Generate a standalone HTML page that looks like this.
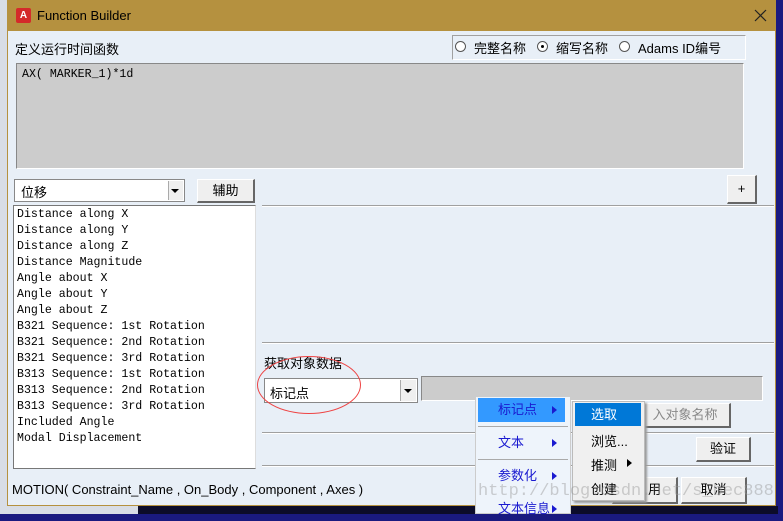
<!DOCTYPE html>
<html><head><meta charset="utf-8"><style>
*{margin:0;padding:0;box-sizing:border-box}
body{width:783px;height:514px;overflow:hidden;position:relative;background:#1a1a80;font-family:"Liberation Sans","Noto Sans CJK SC",sans-serif;font-size:13px;color:#000}
.a{position:absolute}
.mono{font-family:"Liberation Mono","DejaVu Sans Mono",monospace;font-size:11.6px}
.btn{position:absolute;background:#efefef;border:1px solid #fff;border-right:2px solid #666;border-bottom:2px solid #666;text-align:center;font-size:13px}
.hl{position:absolute;height:2px;border-top:1px solid #a0a0a0;border-bottom:1px solid #fff}
.list div{height:16px;line-height:16px}
.mi{position:absolute;left:0;width:95px;height:24px;line-height:24px;padding-left:20px;color:#1a1ad0}
.tri{position:absolute;right:8px;top:8px;width:0;height:0;border-top:4px solid transparent;border-bottom:4px solid transparent;border-left:5px solid #1a1ad0}
.rad{position:absolute;top:41px;width:11px;height:11px;border:1px solid #555;border-radius:50%;background:#fff}
</style></head><body>
<div class="a" style="left:0;top:0;width:8px;height:514px;background:#d8dde6"></div>
<div class="a" style="left:8px;top:506px;width:130px;height:8px;background:#d8dde6"></div>
<div class="a" style="left:138px;top:506px;width:640px;height:8px;background:#0c0c2a"></div>
<div class="a" style="left:7px;top:0;width:769px;height:506px;background:#e8eff7;border:1px solid #b5913f"></div>
<div class="a" style="left:7px;top:0;width:769px;height:31px;background:#b5913f"></div>
<div class="a" style="left:16px;top:8px;width:15px;height:15px;background:#d42a2a;border-radius:2px;color:#fff;font-size:10px;font-weight:bold;text-align:center;line-height:15px">A</div>
<div class="a" style="left:37px;top:8px;font-size:13px">Function Builder</div>
<svg class="a" style="left:754px;top:9px" width="13" height="13"><path d="M1 1L12 12M12 1L1 12" stroke="#222" stroke-width="1.2"/></svg>
<div class="a" style="left:15px;top:39px">定义运行时间函数</div>
<div class="a" style="left:452px;top:35px;width:294px;height:25px;border:1px solid #a0a0a0;border-right-color:#fff;border-bottom-color:#fff;background:#e8eff7"></div>
<div class="rad" style="left:455px"></div>
<div class="a" style="left:474px;top:38px">完整名称</div>
<div class="rad" style="left:537px"></div><div class="a" style="left:541px;top:45px;width:3px;height:3px;background:#000;border-radius:50%"></div>
<div class="a" style="left:556px;top:38px">缩写名称</div>
<div class="rad" style="left:619px"></div>
<div class="a" style="left:638px;top:38px">Adams ID编号</div>
<div class="a" style="left:16px;top:63px;width:728px;height:106px;background:#cccccc;border:1px solid #888;border-right-color:#fff;border-bottom-color:#fff"></div>
<div class="a mono" style="left:22px;top:68px">AX( MARKER_1)*1d</div>
<div class="a" style="left:14px;top:179px;width:171px;height:23px;background:#fff;border:1px solid #888"></div>
<div class="a" style="left:21px;top:182px">位移</div>
<div class="a" style="left:168px;top:181px;width:15px;height:19px;background:#efefef;border-left:1px solid #aaa"></div>
<div class="a" style="left:171px;top:189px;border-left:4px solid transparent;border-right:4px solid transparent;border-top:4px solid #000"></div>
<div class="btn" style="left:197px;top:179px;width:58px;height:24px;line-height:21px">辅助</div>
<div class="a mono list" style="left:13px;top:205px;width:243px;height:264px;background:#fff;border:1px solid #777;border-right-color:#ddd;padding:1px 0 0 3px">
<div>Distance along X</div><div>Distance along Y</div><div>Distance along Z</div><div>Distance Magnitude</div><div>Angle about X</div><div>Angle about Y</div><div>Angle about Z</div><div>B321 Sequence: 1st Rotation</div><div>B321 Sequence: 2nd Rotation</div><div>B321 Sequence: 3rd Rotation</div><div>B313 Sequence: 1st Rotation</div><div>B313 Sequence: 2nd Rotation</div><div>B313 Sequence: 3rd Rotation</div><div>Included Angle</div><div>Modal Displacement</div></div>
<div class="btn" style="left:727px;top:175px;width:30px;height:29px;line-height:26px">+</div>
<div class="hl" style="left:262px;top:205px;width:512px"></div>
<div class="hl" style="left:262px;top:342px;width:512px"></div>
<div class="a" style="left:264px;top:353px">获取对象数据</div>
<div class="a" style="left:264px;top:378px;width:154px;height:25px;background:#fff;border:1px solid #888"></div>
<div class="a" style="left:270px;top:383px">标记点</div>
<div class="a" style="left:400px;top:380px;width:16px;height:21px;background:#efefef;border-left:1px solid #aaa"></div>
<div class="a" style="left:404px;top:389px;border-left:4px solid transparent;border-right:4px solid transparent;border-top:4px solid #000"></div>
<div class="a" style="left:421px;top:376px;width:342px;height:25px;background:#cccccc;border:1px solid #888;border-right-color:#fff;border-bottom-color:#fff"></div>
<div class="a" style="left:257px;top:356px;width:104px;height:58px;border:1px solid #e44;border-radius:50%"></div>
<div class="btn" style="left:600px;top:403px;width:131px;height:25px;line-height:22px;color:#888;padding-left:40px">入对象名称</div>
<div class="hl" style="left:262px;top:432px;width:512px"></div>
<div class="btn" style="left:696px;top:437px;width:55px;height:25px;line-height:22px">验证</div>
<div class="hl" style="left:262px;top:465px;width:512px"></div>
<div class="a" style="left:12px;top:482px">MOTION( Constraint_Name , On_Body , Component , Axes )</div>
<div class="btn" style="left:612px;top:477px;width:66px;height:27px;line-height:24px;padding-left:20px">用</div>
<div class="btn" style="left:681px;top:477px;width:66px;height:27px;line-height:24px">取消</div>
<div class="a" style="left:475px;top:396px;width:96px;height:118px;background:#eef4fb;border:1px solid #ccc"></div>
<div class="mi" style="left:478px;top:398px;width:87px;background:#3399ff">标记点<span class="tri"></span></div>
<div class="a" style="left:478px;top:426px;width:90px;height:1px;background:#aaa"></div>
<div class="mi" style="left:478px;top:431px;width:87px">文本<span class="tri"></span></div>
<div class="a" style="left:478px;top:459px;width:90px;height:1px;background:#aaa"></div>
<div class="mi" style="left:478px;top:464px;width:87px">参数化<span class="tri"></span></div>
<div class="mi" style="left:478px;top:497px;width:87px">文本信息<span class="tri"></span></div>
<div class="a" style="left:572px;top:401px;width:73px;height:100px;background:#f0f0f0;border:1px solid #bbb;box-shadow:2px 2px 2px #999"></div>
<div class="a" style="left:575px;top:403px;width:66px;height:23px;background:#0078d7;color:#fff;line-height:23px;padding-left:16px">选取</div>
<div class="a" style="left:591px;top:431px">浏览...</div>
<div class="a" style="left:591px;top:455px">推测</div>
<div class="a" style="left:627px;top:459px;border-top:4px solid transparent;border-bottom:4px solid transparent;border-left:5px solid #000"></div>
<div class="a" style="left:591px;top:479px">创建</div>
<div class="a" style="left:478px;top:482px;font-family:'Liberation Mono',monospace;font-size:17px;color:rgba(150,150,150,0.45)">http://blog.csdn.net/s_bec888</div>
</body></html>
